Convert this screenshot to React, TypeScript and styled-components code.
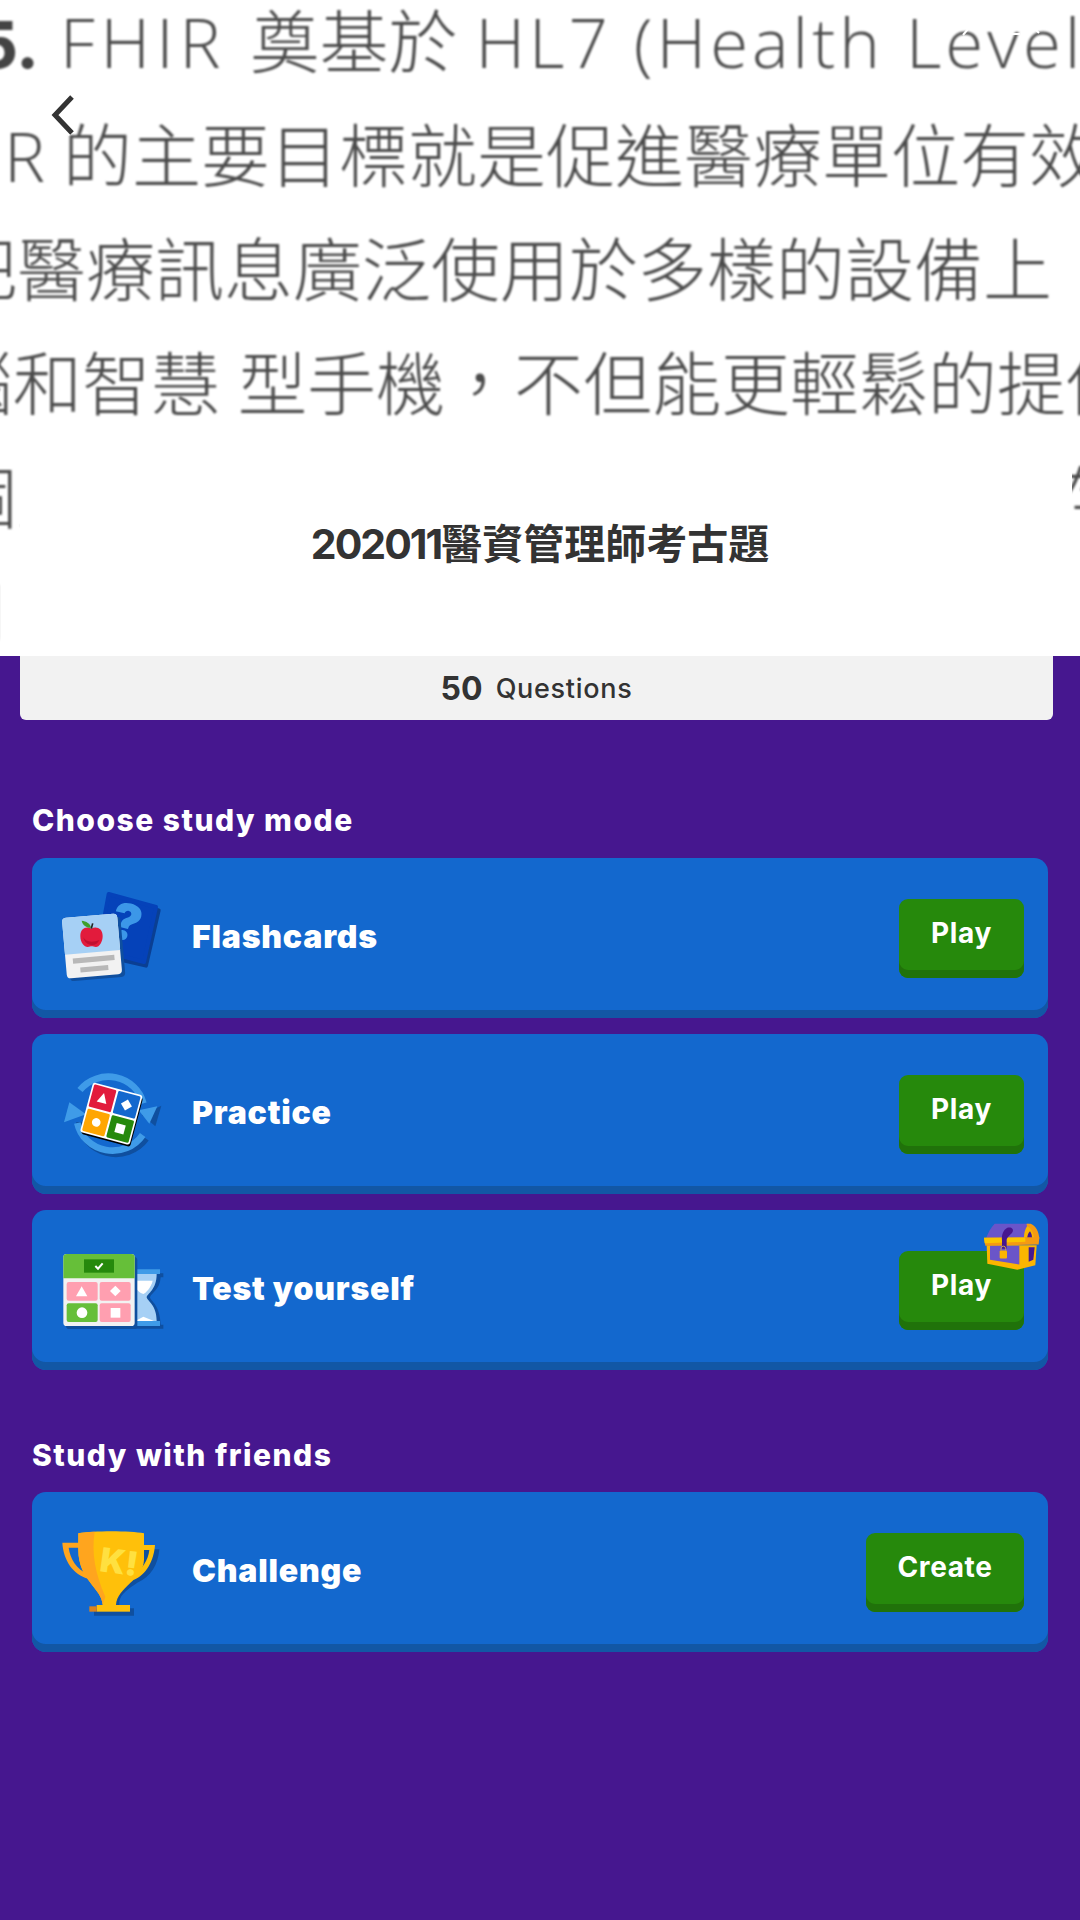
import React from 'react';
import styled, { createGlobalStyle } from 'styled-components';

const GlobalStyle = createGlobalStyle`
  html, body {
    margin: 0;
    padding: 0;
    background: #46178f;
  }
`;

const sans = `Inter, "Noto Sans CJK TC", sans-serif`;

const Page = styled.div`
  width: 1080px;
  height: 1920px;
  overflow: hidden;
  background: #46178f;
  font-family: ${sans};
`;

const Hero = styled.div`
  position: relative;
  height: 656px;
  overflow: hidden;
  background: #fff;
`;

const ScanLines = styled.div`
  filter: blur(0.9px);
`;

const ScanLine = styled.div<{ $shift: number }>`
  height: 114px;
  margin-left: ${(p) => p.$shift}px;
  font-family: "Open Sans", "Noto Sans CJK TC", sans-serif;
  font-size: 69px;
  font-weight: 300;
  line-height: 82px;
  color: #4a4a4a;
  white-space: nowrap;
`;

const ScanBold = styled.b`
  font-family: Inter, sans-serif;
  font-weight: 800;
  font-size: 64px;
  color: #444;
  margin-right: 21px;
`;

const ScanLatin = styled.span<{ $spacing: number }>`
  letter-spacing: ${(p) => p.$spacing}px;
`;

const BackButton = styled.div`
  position: absolute;
  left: 46px;
  top: 90px;
  display: flex;
`;

const StatusMarks = styled.svg`
  position: absolute;
  left: 955px;
  top: 24px;
`;

const TitlePanel = styled.div`
  position: absolute;
  left: 20px;
  right: 8px;
  top: 440px;
  bottom: 0;
  display: flex;
  align-items: center;
  justify-content: center;
  padding: 0 12px 14px 0;
  background: #fff;
`;

const Title = styled.h1`
  margin: 0;
  font-size: 41px;
  font-weight: 700;
  color: #333;
`;

const TitleDigits = styled.span`
  letter-spacing: -2px;
`;

const QuestionsBar = styled.div`
  display: flex;
  align-items: center;
  justify-content: center;
  gap: 13px;
  height: 64px;
  margin: 0 27px 0 20px;
  border-radius: 0 0 6px 6px;
  background: #f2f2f2;
  color: #333;
`;

const QuestionCount = styled.span`
  font-size: 32px;
  font-weight: 700;
`;

const QuestionLabel = styled.span`
  font-size: 27px;
  font-weight: 500;
  letter-spacing: 0.7px;
`;

const Section = styled.section<{ $top: number; $gap: number }>`
  display: flex;
  flex-direction: column;
  padding: 0 32px;
  margin-top: ${(p) => p.$top}px;

  h2 {
    margin: 0 0 ${(p) => p.$gap}px;
  }
`;

const SectionTitle = styled.h2`
  height: 34px;
  font-size: 30px;
  font-weight: 800;
  line-height: 34px;
  letter-spacing: 1.5px;
  color: #fff;
`;

const ModeList = styled.div`
  display: flex;
  flex-direction: column;
  gap: 16px;
`;

const ModeCard = styled.div`
  position: relative;
  display: flex;
  align-items: center;
  gap: 16px;
  height: 160px;
  box-sizing: border-box;
  padding: 0 24px;
  border-radius: 14px;
  background: #1368ce;
  box-shadow: inset 0 -8px 0 #1257a5;
`;

const ModeIcon = styled.svg`
  flex: none;
`;

const ModeName = styled.span`
  flex: 1;
  padding-bottom: 3px;
  font-size: 32px;
  font-weight: 900;
  letter-spacing: 0.8px;
  color: #fff;
`;

const ActionButton = styled.div<{ $wide?: boolean }>`
  display: flex;
  align-items: center;
  justify-content: center;
  width: ${(p) => (p.$wide ? 158 : 125)}px;
  height: 79px;
  box-sizing: border-box;
  padding-bottom: 10px;
  border-radius: 9px;
  background: #26890c;
  box-shadow: inset 0 -8px 0 #20720a;
  font-size: 28px;
  font-weight: 700;
  letter-spacing: 0.6px;
  color: #fff;
`;

const ChestBadge = styled.svg`
  position: absolute;
  top: 13px;
  right: 8px;
`;

const FlashcardsIcon = () => (
  <ModeIcon width="120" height="104" viewBox="78 78 360 312">
    <path d="M236 104 382 146 344 312 206 280Z" fill="#0a3f93" stroke="#0a3f93" strokeWidth="12" strokeLinejoin="round" transform="translate(4 5)" />
    <path d="M236 102 378 141 342 306 205 270Z" fill="#0542b9" stroke="#0542b9" strokeWidth="12" strokeLinejoin="round" />
    <text x="244" y="240" fontFamily="Inter, sans-serif" fontSize="150" fontWeight="900" fill="#3c97e8" transform="rotate(14 290 190)">?</text>
    <g transform="rotate(-5 187 257)">
      <rect x="112" y="176" width="166" height="182" rx="12" fill="#0f4f9f" />
      <rect x="103" y="167" width="166" height="182" rx="12" fill="#f2f2f2" />
      <path d="M103 179a12 12 0 0 1 12-12h142a12 12 0 0 1 12 12v98H103Z" fill="#a6d0f5" />
      <rect x="125" y="290" width="125" height="16" fill="#b8b8b8" />
      <rect x="145" y="319" width="84" height="15" fill="#b8b8b8" />
    </g>
    <path d="M184 206c-14-8-33-2-33 22 0 20 12 33 22 33 6 0 8-2 12-2s7 2 13 2c10 0 20-15 20-33 0-24-20-30-34-22Z" fill="#e21b3c" />
    <path d="M160 232c6 12 24 18 48 8-6 12-16 18-28 14-10-2-18-10-20-22Z" fill="#c01030" />
    <path d="M183 203c-2-12-14-20-28-21 2 12 14 22 28 21Z" fill="#3f9e2c" />
    <path d="M184 206l4-16" stroke="#222" strokeWidth="5" />
  </ModeIcon>
);

const PracticeIcon = () => (
  <ModeIcon width="120" height="104" viewBox="78 81 360 312">
    <g fill="none" strokeWidth="20">
      <path d="M340 305a110 105 0 0 1-200-50" stroke="#0f4f9f" transform="translate(8 6)" />
      <path d="M150 165a108 104 0 0 1 190 40" stroke="#3f9be8" />
      <path d="M338 300a108 104 0 0 1-196-36" stroke="#3f9be8" />
    </g>
    <path d="M394 212 376 274 336 240Z" fill="#0f4f9f" />
    <path d="M382 214 358 266 326 226Z" fill="#3f9be8" />
    <path d="M102 262 118 202 168 238Z" fill="#3f9be8" />
    <g transform="rotate(15 244 236)">
      <rect x="172" y="166" width="152" height="152" rx="8" fill="#000" />
      <rect x="167" y="159" width="154" height="154" rx="8" fill="#fff" />
      <rect x="172" y="164" width="69" height="69" rx="4" fill="#e21b3c" />
      <rect x="247" y="164" width="69" height="69" rx="4" fill="#1368ce" />
      <rect x="172" y="239" width="69" height="69" rx="4" fill="#ffa602" />
      <rect x="247" y="239" width="69" height="69" rx="4" fill="#26890c" />
      <path d="M207 182 222 212H192Z" fill="#fff" />
      <path d="M281 182 298 199 281 216 264 199Z" fill="#fff" />
      <circle cx="207" cy="273" r="13" fill="#fff" />
      <rect x="267" y="259" width="28" height="28" fill="#fff" />
    </g>
  </ModeIcon>
);

const TestIcon = () => (
  <ModeIcon width="120" height="104" viewBox="78 84 360 312">
    <path d="M314 190H400V202H392C390 240 362 250 360 262 362 274 390 284 392 344H400V356H314Z" fill="#0f4f9f" />
    <path d="M316 178H390V192H316ZM316 333H390V348H316Z" fill="#3f9be8" />
    <path d="M316 192H380C380 240 352 250 350 262 352 274 380 284 380 333H316Z" fill="#a6d0f5" />
    <path d="M316 212H368C364 232 346 250 340 252 330 250 320 240 316 232Z" fill="#fff" />
    <path d="M316 333 340 320 372 333Z" fill="#fff" />
    <rect x="108" y="141" width="214" height="216" rx="10" fill="#0f4f9f" />
    <rect x="100" y="132" width="214" height="216" rx="10" fill="#f2f2f2" />
    <path d="M100 142a10 10 0 0 1 10-10h194a10 10 0 0 1 10 10v63H100Z" fill="#66bf39" />
    <rect x="162" y="148" width="90" height="40" fill="#26890c" />
    <path d="M196 168l8 8 14-16" fill="none" stroke="#fff" strokeWidth="6" />
    <rect x="110" y="216" width="93" height="56" rx="6" fill="#ff9fb0" />
    <rect x="209" y="216" width="93" height="56" rx="6" fill="#ff9fb0" />
    <rect x="110" y="280" width="93" height="56" rx="6" fill="#66bf39" />
    <rect x="209" y="280" width="93" height="56" rx="6" fill="#ff9fb0" />
    <path d="M155 229 172 259H138Z" fill="#fff" />
    <path d="M256 227 272 243 256 259 240 243Z" fill="#fff" />
    <circle cx="156" cy="308" r="16" fill="#fff" />
    <rect x="242" y="294" width="29" height="29" fill="#fff" />
  </ModeIcon>
);

const TrophyIcon = () => (
  <ModeIcon width="120" height="104" viewBox="78 90 360 312">
    <path d="M340 178H388C384 225 362 262 322 278 296 296 272 310 268 335V355H312V377H192V358H230C226 320 200 295 182 275L320 180Z" fill="#0f4f9f" />
    <path d="M97 158H150V173H116C120 205 140 240 175 252V266C130 255 100 210 97 158Z" fill="#ffa51e" />
    <path d="M340 165H375C372 210 350 255 310 270V256C335 240 355 210 358 180H340Z" fill="#ffc00a" />
    <path d="M145 130C190 122 300 122 342 130V210C340 270 262 290 258 345H218C216 295 145 270 145 180Z" fill="#ffc00a" />
    <path d="M145 130C160 127 175 126 194 125 184 190 196 250 226 320L218 345C216 295 145 270 145 180Z" fill="#ffa51e" />
    <rect x="200" y="345" width="100" height="20" fill="#ffc00a" />
    <rect x="178" y="349" width="22" height="16" fill="#d9821e" />
    <text x="212" y="250" fontFamily="Inter, sans-serif" fontSize="100" fontWeight="900" fill="#ffe040" transform="rotate(8 260 205)">K!</text>
  </ModeIcon>
);

const Chest = () => (
  <ChestBadge width="56" height="47" viewBox="372 68 168 140">
    <path d="M380 134H530L526 194 472 208 382 190Z" fill="#fbb500" />
    <path d="M390 136H478V192L390 178Z" fill="#6a55c9" />
    <path d="M506 140H524L520 178 506 184Z" fill="#46178f" />
    <path d="M404 70H506C522 74 532 92 534 114H378C384 98 392 82 404 70Z" fill="#6a55c9" />
    <path d="M500 70H512C528 76 536 94 538 114H520C518 96 512 84 500 74Z" fill="#f59a12" />
    <path d="M502 76C494 88 492 100 492 112H522C520 96 514 84 502 76Z" fill="#fbb500" />
    <path d="M510 92C504 98 502 106 502 112H516C516 104 514 98 510 92Z" fill="#46178f" />
    <path d="M372 112 538 110 536 132 376 136Z" fill="#f59a12" />
    <path d="M372 112 496 111V124L374 128Z" fill="#fbc500" />
    <path d="M442 82C452 78 462 84 458 94 454 102 442 108 440 118V145H426V120C424 104 430 88 442 82Z" fill="#46178f" />
    <rect x="419" y="150" width="22" height="24" rx="3" fill="#fbb500" />
    <path d="M423 150v-6a7 7 0 0 1 14 0v6" fill="none" stroke="#cfa24a" strokeWidth="3" />
  </ChestBadge>
);

const modes = [
  { name: 'Flashcards', icon: <FlashcardsIcon /> },
  { name: 'Practice', icon: <PracticeIcon /> },
  { name: 'Test yourself', icon: <TestIcon />, reward: true },
];

function App() {
  return (
    <Page>
      <GlobalStyle />
      <Hero>
        <ScanLines>
          <ScanLine $shift={-24}>
            <ScanBold>5.</ScanBold>
            <ScanLatin $spacing={6}>FHIR </ScanLatin>奠基於 <ScanLatin $spacing={4}>HL7 (Health Level</ScanLatin>
          </ScanLine>
          <ScanLine $shift={4}>R 的主要目標就是促進醫療單位有效</ScanLine>
          <ScanLine $shift={-52}>把醫療訊息廣泛使用於多樣的設備上</ScanLine>
          <ScanLine $shift={-56}>腦和智慧 型手機，不但能更輕鬆的提供</ScanLine>
          <ScanLine $shift={-52}>個人健康資料與醫療應用程式都能被存取使</ScanLine>
          <ScanLine $shift={-62}>用</ScanLine>
        </ScanLines>
        <StatusMarks width="100" height="14" viewBox="0 0 100 14">
          <path d="M8 11l5-6M56 10h9M70 9l3-3h8l3 3" fill="none" stroke="#fff" strokeWidth="2" />
        </StatusMarks>
        <BackButton>
          <svg width="34" height="48" viewBox="0 0 34 48" fill="none">
            <path d="M26 7 9 25l17 18" stroke="#fff" strokeWidth="9" />
            <path d="M26 7 9 25l17 18" stroke="#333" strokeWidth="5" />
          </svg>
        </BackButton>
        <TitlePanel>
          <Title><TitleDigits>202011</TitleDigits>醫資管理師考古題</Title>
        </TitlePanel>
      </Hero>
      <QuestionsBar>
        <QuestionCount>50</QuestionCount>
        <QuestionLabel>Questions</QuestionLabel>
      </QuestionsBar>
      <Section $top={83} $gap={21}>
        <SectionTitle>Choose study mode</SectionTitle>
        <ModeList>
          {modes.map((mode) => (
            <ModeCard key={mode.name}>
              {mode.icon}
              <ModeName>{mode.name}</ModeName>
              <ActionButton>Play</ActionButton>
              {mode.reward && <Chest />}
            </ModeCard>
          ))}
        </ModeList>
      </Section>
      <Section $top={68} $gap={20}>
        <SectionTitle>Study with friends</SectionTitle>
        <ModeCard>
          <TrophyIcon />
          <ModeName>Challenge</ModeName>
          <ActionButton $wide>Create</ActionButton>
        </ModeCard>
      </Section>
    </Page>
  );
}

export default App;
